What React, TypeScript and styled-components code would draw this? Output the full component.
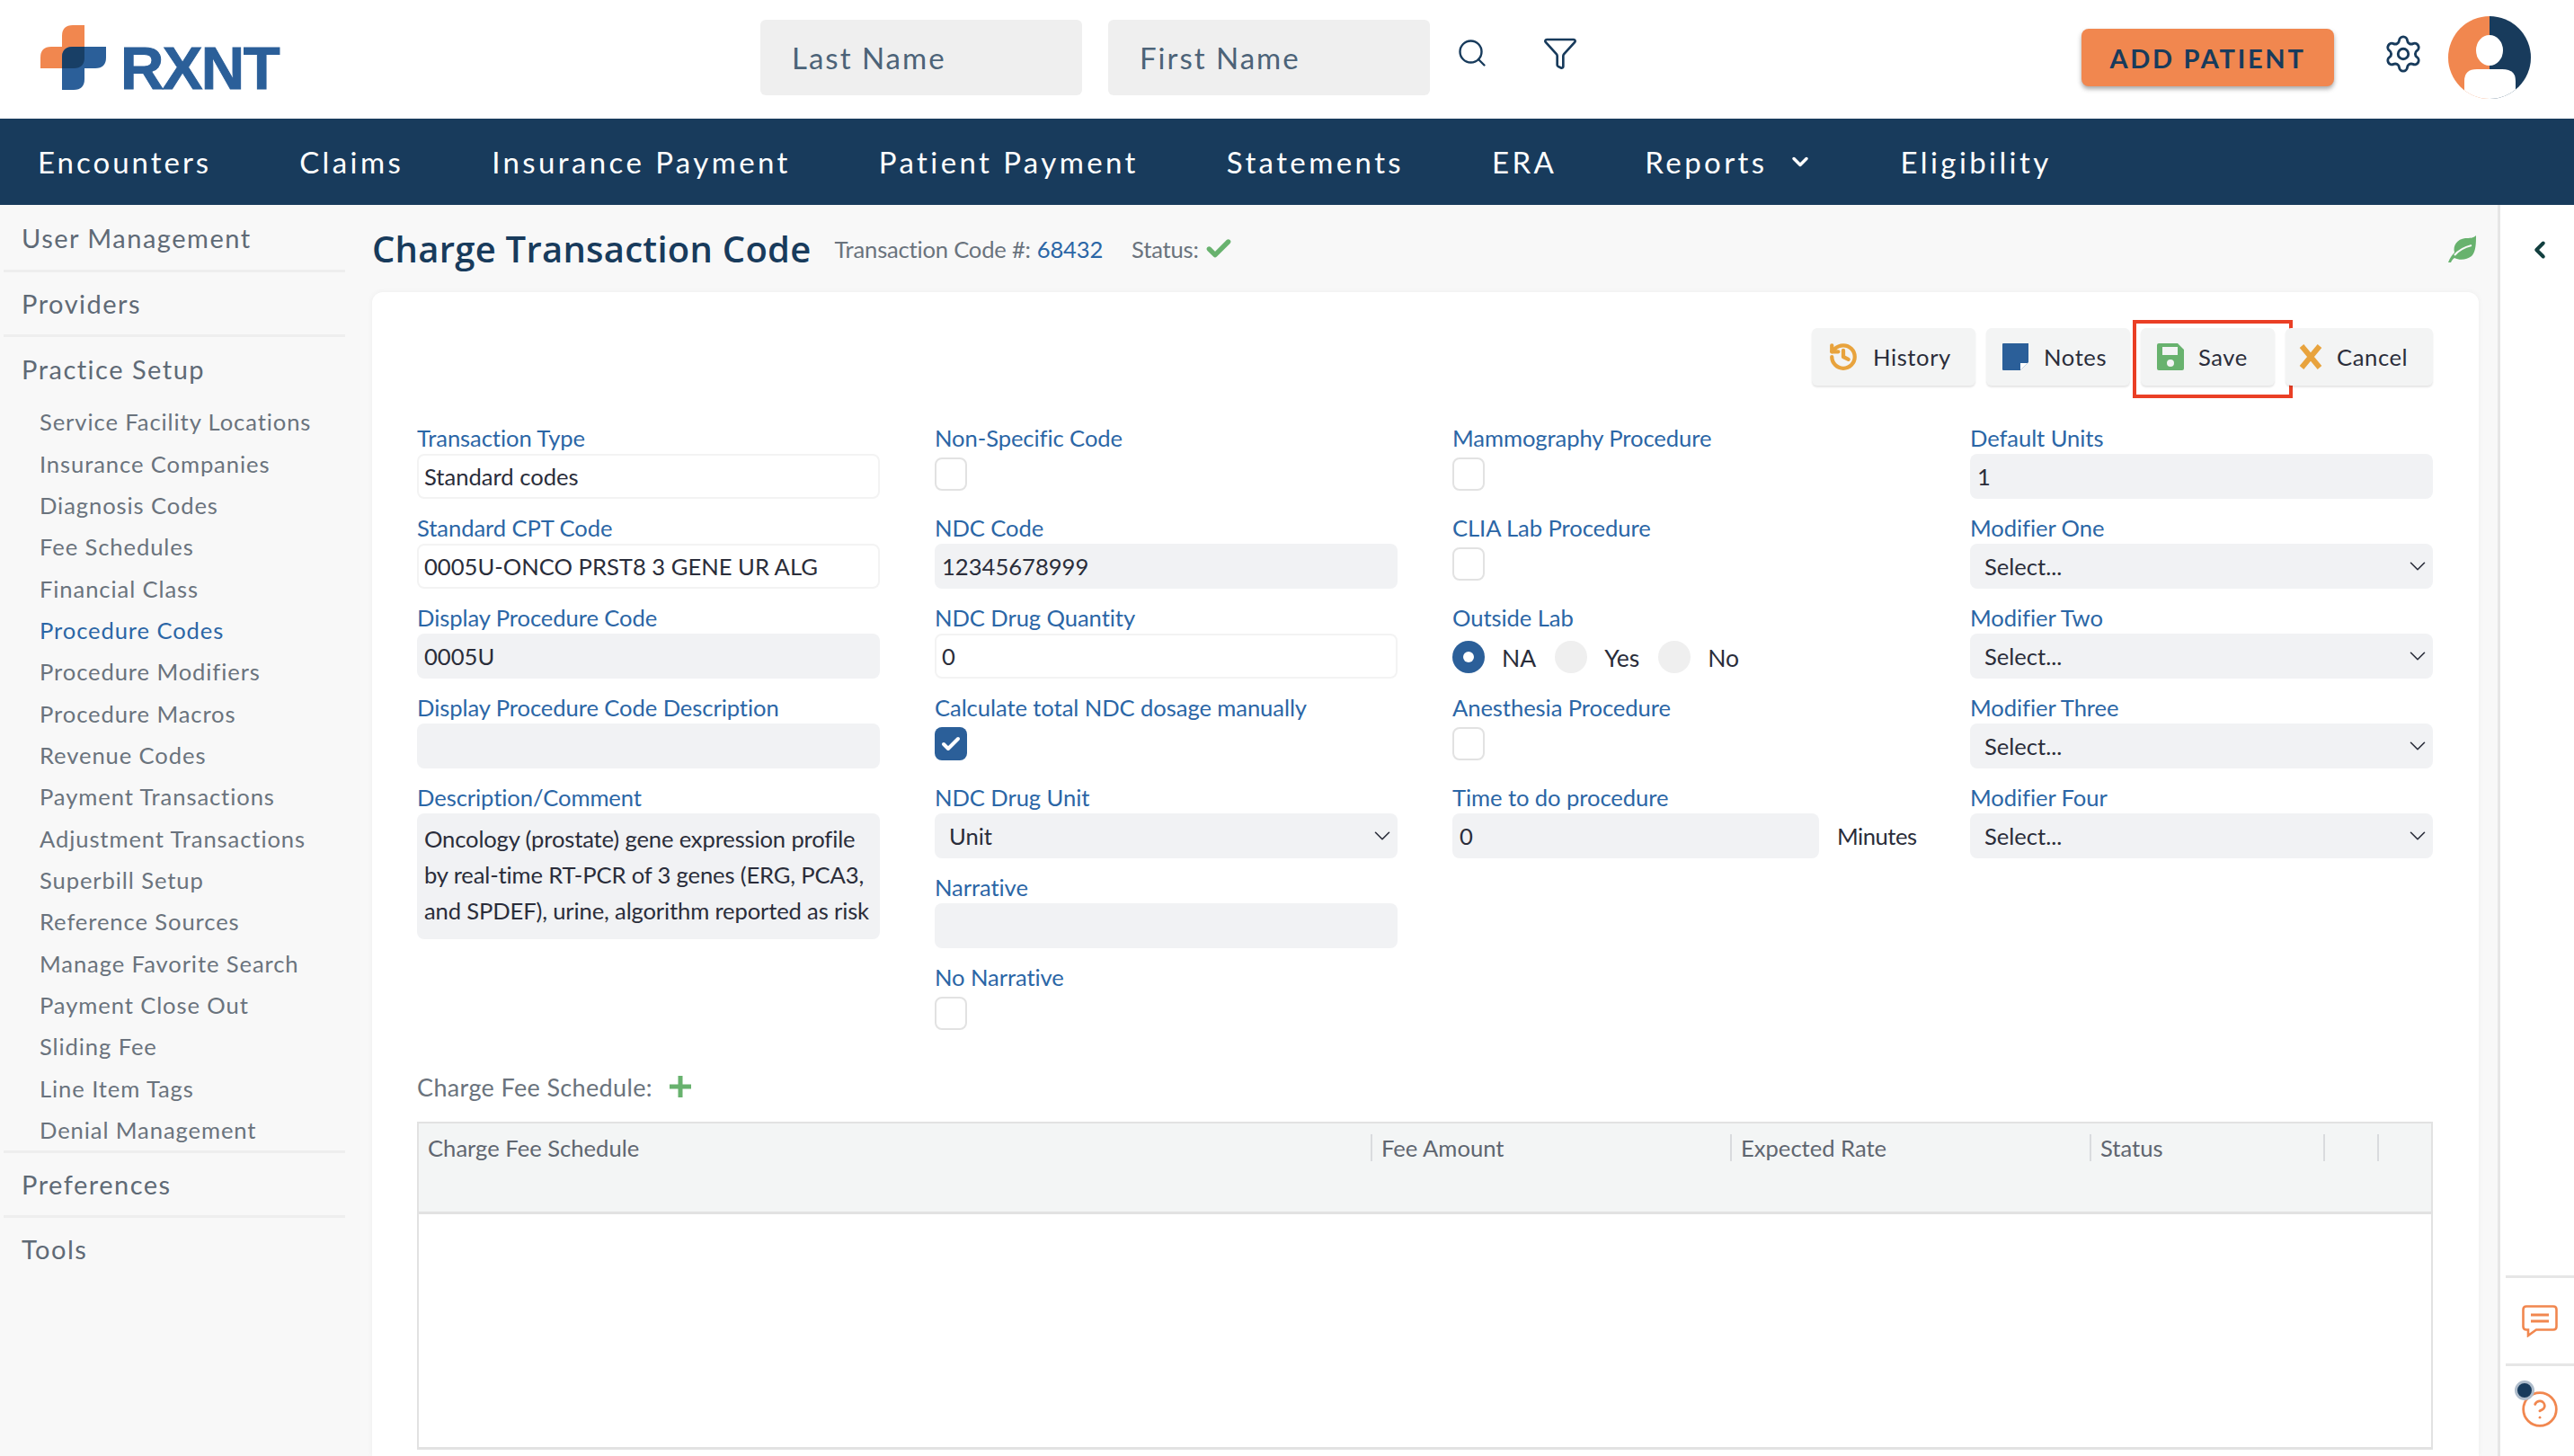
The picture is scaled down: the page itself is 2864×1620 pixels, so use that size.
import React from "react";
import styled, { createGlobalStyle } from "styled-components";
import { Search, Funnel, Settings, History, ChevronDown, ChevronLeft, CircleHelp, Check } from "lucide-react";

const UI = `"Lato", "Liberation Sans", sans-serif`;
const BLUE = "#2b66a6";
const NAVY = "#183b5c";
const ORANGE = "#f1874f";
const GREEN = "#68b26e";
const INK = "#2a2d3a";

const Global = createGlobalStyle`
  html, body { margin: 0; padding: 0; background: #fff; }
  body { width: 2864px; height: 1620px; overflow: hidden; font-family: ${UI}; }
  * { box-sizing: border-box; }
`;

const Page = styled.div`
  width: 2864px;
  height: 1620px;
  display: flex;
  flex-direction: column;
  overflow: hidden;
`;

const TopBar = styled.header`
  height: 132px;
  flex: none;
  display: flex;
  align-items: center;
  padding: 0 0 4px 45px;
  background: #fff;
`;
const Logo = styled.div`
  display: flex;
  align-items: flex-end;
  width: 801px;
  height: 72px;
`;
const LogoText = styled.span`
  margin-left: 16px;
  font-family: "Liberation Sans", sans-serif;
  font-weight: 700;
  font-size: 67px;
  line-height: 48px;
  height: 48px;
  letter-spacing: -1.6px;
  color: #2b5f99;
  -webkit-text-stroke: 1px #2b5f99;
`;
const SearchInput = styled.div`
  width: 358px;
  height: 84px;
  margin-right: 29px;
  padding-left: 35px;
  display: flex;
  align-items: center;
  border-radius: 6px;
  background: #efefef;
  color: #4c6378;
  font-size: 33px;
  letter-spacing: 2px;
`;
const IconSlot = styled.div<{ $w: number; $ml: number }>`
  width: ${(p) => p.$w}px;
  margin-left: ${(p) => p.$ml}px;
  margin-top: -10px;
  display: flex;
  color: ${NAVY};
`;
const AddButton = styled.button`
  margin-left: 560px;
  width: 281px;
  height: 64px;
  border: 0;
  border-radius: 8px;
  background: ${ORANGE};
  color: ${NAVY};
  font-family: ${UI};
  font-weight: 700;
  font-size: 29px;
  letter-spacing: 2.7px;
  box-shadow: 0 3px 5px rgba(60, 60, 60, 0.45);
`;
const Gear = styled.div`
  margin-left: 54px;
  margin-top: -8px;
  display: flex;
  color: ${NAVY};
`;
const Avatar = styled.svg`
  margin-left: 27px;
  margin-top: -1px;
`;

const NavBar = styled.nav`
  height: 96px;
  flex: none;
  display: flex;
  align-items: center;
  gap: 98px;
  padding-left: 42px;
  background: ${NAVY};
`;
const NavItem = styled.a`
  display: flex;
  align-items: center;
  gap: 22px;
  color: #fff;
  font-size: 33px;
  letter-spacing: 3.4px;
  &:first-child {
    letter-spacing: 3px;
  }
`;

const Body = styled.div`
  flex: 1;
  min-height: 0;
  display: flex;
  background: #f8f8f8;
`;
const Sidebar = styled.aside`
  width: 414px;
  flex: none;
  padding-left: 4px;
`;
const SideGroup = styled.div`
  width: 380px;
  border-bottom: 3px solid #eeeeee;
`;
const SideHead = styled.div<{ $h?: number }>`
  height: ${(p) => p.$h ?? 69}px;
  padding-left: 20px;
  display: flex;
  align-items: center;
  color: #5f6a76;
  font-size: 29px;
  letter-spacing: 1.5px;
`;
const SideSub = styled.div<{ $active?: boolean }>`
  height: 46.35px;
  padding-left: 40px;
  display: flex;
  align-items: center;
  color: ${(p) => (p.$active ? BLUE : "#6a737d")};
  font-size: 25.6px;
  letter-spacing: 0.9px;
`;
const SideTail = styled.div`
  width: 380px;
`;

const Main = styled.main`
  flex: 1;
  min-width: 0;
  display: flex;
  flex-direction: column;
`;
const TitleRow = styled.div`
  height: 97px;
  flex: none;
  display: flex;
  align-items: center;
  padding-right: 24px;
`;
const Title = styled.h1`
  margin: 0;
  font-family: "Open Sans", sans-serif;
  font-weight: 600;
  font-size: 40px;
  color: ${NAVY};
  letter-spacing: 0.25px;
`;
const Meta = styled.span<{ $ml: number }>`
  margin-left: ${(p) => p.$ml}px;
  display: flex;
  align-items: center;
  color: #6a737d;
  font-size: 25.6px;
  letter-spacing: -0.2px;
`;
const MetaValue = styled.span`
  margin-left: 7px;
  color: ${BLUE};
`;
const StatusMark = styled.span`
  margin-left: 6px;
  display: flex;
  color: ${GREEN};
`;
const Leaf = styled.svg`
  margin-left: auto;
`;

const Card = styled.section`
  width: 2344px;
  flex: 1;
  min-height: 0;
  padding: 40px 51px 0 50px;
  background: #fff;
  border-radius: 12px 12px 0 0;
  box-shadow: 0 0 6px rgba(0, 0, 0, 0.05);
`;
const Toolbar = styled.div`
  height: 64px;
  display: flex;
  justify-content: flex-end;
  gap: 12px;
`;
const ToolButton = styled.button<{ $w: number; $pl?: number }>`
  position: relative;
  width: ${(p) => p.$w}px;
  height: 64px;
  padding: 0 0 0 ${(p) => p.$pl ?? 18}px;
  display: flex;
  align-items: center;
  gap: 16px;
  border: 0;
  border-radius: 6px;
  background: #f3f4f4;
  box-shadow: 0 2px 2px rgba(0, 0, 0, 0.1);
  font-family: ${UI};
  font-size: 25.6px;
  letter-spacing: 0.6px;
  color: ${INK};
`;
const Highlight = styled.span`
  position: absolute;
  left: -9px;
  top: -9px;
  width: 178px;
  height: 87px;
  border: 4px solid #ea3f25;
  pointer-events: none;
`;

const FormGrid = styled.div`
  margin-top: 44px;
  display: grid;
  grid-template-columns: repeat(4, 515px);
  column-gap: 61px;
`;
const Column = styled.div`
  display: flex;
  flex-direction: column;
`;
const Field = styled.div`
  height: 100px;
  flex: none;
`;
const Label = styled.label`
  display: block;
  height: 32px;
  line-height: 28px;
  color: ${BLUE};
  font-size: 25.6px;
  letter-spacing: -0.08px;
  white-space: nowrap;
`;
const Box = styled.div<{ $white?: boolean }>`
  height: 50px;
  display: flex;
  align-items: center;
  padding-left: ${(p) => (p.$white ? 6 : 8)}px;
  border-radius: 8px;
  color: ${INK};
  font-size: 25.6px;
  white-space: nowrap;
  background: ${(p) => (p.$white ? "#fff" : "#f1f2f4")};
  border: ${(p) => (p.$white ? "2px solid #f3f3f3" : "0")};
`;
const SelectBox = styled(Box)`
  justify-content: space-between;
  padding: 0 2px 0 16px;
`;
const TextBlock = styled.div`
  height: 140px;
  padding: 8px 0 0 8px;
  border-radius: 8px;
  background: #f1f2f4;
  color: ${INK};
  font-size: 25.6px;
  line-height: 40px;
  letter-spacing: -0.15px;
`;
const CheckBox = styled.div<{ $on?: boolean }>`
  width: 36px;
  height: 37px;
  margin-top: 4px;
  display: flex;
  align-items: center;
  justify-content: center;
  border-radius: 8px;
  color: #fff;
  background: ${(p) => (p.$on ? "#2b5f99" : "#fff")};
  border: ${(p) => (p.$on ? "0" : "2px solid #e2e2e2")};
`;
const RadioRow = styled.div`
  margin-top: 8px;
  display: flex;
  align-items: center;
`;
const Radio = styled.span<{ $on?: boolean; $ml?: number }>`
  width: 36px;
  height: 36px;
  margin-left: ${(p) => p.$ml ?? 0}px;
  border-radius: 50%;
  background: ${(p) => (p.$on ? "#2b5f99" : "#efefef")};
  display: flex;
  align-items: center;
  justify-content: center;
  &::after {
    content: "";
    display: ${(p) => (p.$on ? "block" : "none")};
    width: 12px;
    height: 12px;
    border-radius: 50%;
    background: #fff;
  }
`;
const RadioText = styled.span`
  margin: 2px 0 0 19px;
  color: ${INK};
  font-size: 26.5px;
`;
const TimeRow = styled.div`
  display: flex;
  align-items: center;
`;
const TimeInput = styled(Box)`
  width: 408px;
  flex: none;
`;
const Unit = styled.span`
  margin-left: 20px;
  color: ${INK};
  font-size: 25.6px;
  letter-spacing: -0.5px;
  white-space: nowrap;
`;

const FeeHead = styled.div`
  margin-top: 20px;
  height: 32px;
  display: flex;
  align-items: center;
  gap: 18px;
  color: #6a737d;
  font-size: 27px;
  letter-spacing: 0.35px;
`;
const Table = styled.div`
  margin-top: 23px;
  height: 365px;
  border: 2px solid #e2e2e2;
  border-bottom-width: 3px;
`;
const TableHead = styled.div`
  height: 101px;
  border-bottom: 3px solid #e2e2e2;
  background: #f3f5f5;
  display: grid;
  grid-template-columns: 1059px 400px 400px 260px 60px 60px;
`;
const HeadCell = styled.div`
  height: 30px;
  margin-top: 12px;
  padding-left: 10px;
  line-height: 30px;
  color: #5f6670;
  font-size: 25.6px;
  white-space: nowrap;
  & + & {
    border-left: 2px solid #d9dbde;
  }
`;

const Rail = styled.aside`
  width: 85px;
  flex: none;
  display: flex;
  flex-direction: column;
  background: #fff;
  border-left: 3px solid #e6e6e6;
`;
const RailTop = styled.div`
  height: 1191px;
  flex: none;
  padding: 35px 0 0 29px;
  color: #123f3f;
`;
const RailCell = styled.div`
  position: relative;
  height: 98px;
  flex: none;
  margin-left: 6px;
  border-top: 3px solid #e6e6e6;
  display: flex;
  align-items: center;
  justify-content: center;
  color: ${ORANGE};
`;
const Dot = styled.span`
  position: absolute;
  left: 10px;
  top: 16px;
  width: 22px;
  height: 22px;
  border-radius: 50%;
  background: ${NAVY};
  border: 3px solid #aebccb;
`;

const sideTop = ["Service Facility Locations", "Insurance Companies", "Diagnosis Codes", "Fee Schedules", "Financial Class", "Procedure Codes", "Procedure Modifiers", "Procedure Macros", "Revenue Codes", "Payment Transactions", "Adjustment Transactions", "Superbill Setup", "Reference Sources", "Manage Favorite Search", "Payment Close Out", "Sliding Fee", "Line Item Tags", "Denial Management"];

const TextField = ({ label, value, white }: { label: string; value?: string; white?: boolean }) => (
  <Field>
    <Label>{label}</Label>
    <Box $white={white}>{value}</Box>
  </Field>
);
const SelectField = ({ label, value }: { label: string; value: string }) => (
  <Field>
    <Label>{label}</Label>
    <SelectBox>
      {value}
      <ChevronDown size={30} strokeWidth={1.3} />
    </SelectBox>
  </Field>
);
const CheckField = ({ label, on }: { label: string; on?: boolean }) => (
  <Field>
    <Label>{label}</Label>
    <CheckBox $on={on}>{on && <Check size={24} strokeWidth={4} />}</CheckBox>
  </Field>
);

export default function App() {
  return (
    <Page>
      <Global />
      <TopBar>
        <Logo>
          <svg width="73" height="72" viewBox="0 0 73 72">
            <path fill="#f1874f" d="M36 0H49V36Q49 48 37 48H0V36Q0 24 12 24H24V12Q24 0 36 0Z" />
            <path fill="#2b5f99" d="M36 24H73V36Q73 48 61 48H49V60Q49 72 37 72H24V36Q24 24 36 24Z" />
            <path fill="#183f66" d="M36 24H49V36Q49 48 37 48H24V36Q24 24 36 24Z" />
          </svg>
          <LogoText>RXNT</LogoText>
        </Logo>
        <SearchInput>Last Name</SearchInput>
        <SearchInput>First Name</SearchInput>
        <IconSlot $w={36} $ml={0}>
          <Search size={46} strokeWidth={1.6} />
        </IconSlot>
        <IconSlot $w={40} $ml={60}>
          <Funnel size={40} strokeWidth={1.6} />
        </IconSlot>
        <AddButton>ADD PATIENT</AddButton>
        <Gear>
          <Settings size={46} strokeWidth={1.5} />
        </Gear>
        <Avatar width="92" height="92" viewBox="0 0 92 92">
          <defs>
            <clipPath id="avatar-clip">
              <circle cx="46" cy="46" r="46" />
            </clipPath>
          </defs>
          <g clipPath="url(#avatar-clip)">
            <rect width="46" height="92" fill="#f1874f" />
            <rect x="46" width="46" height="92" fill="#183b5c" />
            <ellipse cx="46" cy="38" rx="15" ry="17" fill="#fff" />
            <path fill="#fff" d="M18 92V72Q18 59 32 59H60Q75 59 75 72V92Z" />
          </g>
        </Avatar>
      </TopBar>
      <NavBar>
        <NavItem>Encounters</NavItem>
        <NavItem>Claims</NavItem>
        <NavItem>Insurance Payment</NavItem>
        <NavItem>Patient Payment</NavItem>
        <NavItem>Statements</NavItem>
        <NavItem>ERA</NavItem>
        <NavItem>
          Reports <ChevronDown size={28} strokeWidth={3} />
        </NavItem>
        <NavItem>Eligibility</NavItem>
      </NavBar>
      <Body>
        <Sidebar>
          <SideGroup>
            <SideHead $h={72}>User Management</SideHead>
          </SideGroup>
          <SideGroup>
            <SideHead $h={69}>Providers</SideHead>
          </SideGroup>
          <SideGroup>
            <SideHead $h={71}>Practice Setup</SideHead>
            {sideTop.map((s) => (
              <SideSub key={s} $active={s === "Procedure Codes"}>
                {s}
              </SideSub>
            ))}
          </SideGroup>
          <SideGroup>
            <SideHead $h={69}>Preferences</SideHead>
          </SideGroup>
          <SideTail>
            <SideHead>Tools</SideHead>
          </SideTail>
        </Sidebar>
        <Main>
          <TitleRow>
            <Title>Charge Transaction Code</Title>
            <Meta $ml={26}>
              Transaction Code #:<MetaValue>68432</MetaValue>
            </Meta>
            <Meta $ml={32}>
              Status:
              <StatusMark>
                <Check size={32} strokeWidth={4} />
              </StatusMark>
            </Meta>
            <Leaf width="32" height="30" viewBox="0 0 32 30">
              <path fill={GREEN} d="M1 30C3 25 5 22 8 19 6 11 11 4 20 3 25 3 29 3 32 0 32 8 32 18 27 23 22 27 14 28 8 25 6 26 5 28 4 30Z" />
              <path fill="none" stroke="#f8f8f8" strokeWidth="2" d="M8 22C13 16 19 13 27 11" />
            </Leaf>
          </TitleRow>
          <Card>
            <Toolbar>
              <ToolButton $w={182}>
                <History size={34} strokeWidth={3} color="#e8a33d" />
                History
              </ToolButton>
              <ToolButton $w={160}>
                <svg width="30" height="30" viewBox="0 0 30 30">
                  <path fill="#2b5f99" d="M1 0H29V21L20 30H1Q0 30 0 29V1Q0 0 1 0Z" />
                  <path fill="#fff" d="M20 30V22H28Z" />
                </svg>
                Notes
              </ToolButton>
              <ToolButton $w={149}>
                <svg width="30" height="30" viewBox="0 0 30 30">
                  <path fill={GREEN} fillRule="evenodd" d="M2 0H23L30 7V28Q30 30 28 30H2Q0 30 0 28V2Q0 0 2 0ZM6 4V13H23V4ZM15 18A4 4 0 1 0 15 26 4 4 0 1 0 15 18Z" />
                </svg>
                Save
                <Highlight />
              </ToolButton>
              <ToolButton $w={164} $pl={15}>
                <svg width="26" height="28" viewBox="0 0 26 28">
                  <path stroke="#e8a33d" strokeWidth="6" fill="none" d="M3 2L23 26M23 2L3 26" />
                </svg>
                Cancel
              </ToolButton>
            </Toolbar>
            <FormGrid>
              <Column>
                <TextField label="Transaction Type" value="Standard codes" white />
                <TextField label="Standard CPT Code" value="0005U-ONCO PRST8 3 GENE UR ALG" white />
                <TextField label="Display Procedure Code" value="0005U" />
                <TextField label="Display Procedure Code Description" />
                <Field>
                  <Label>Description/Comment</Label>
                  <TextBlock>Oncology (prostate) gene expression profile by real-time RT-PCR of 3 genes (ERG, PCA3, and SPDEF), urine, algorithm reported as risk</TextBlock>
                </Field>
              </Column>
              <Column>
                <CheckField label="Non-Specific Code" />
                <TextField label="NDC Code" value="12345678999" />
                <TextField label="NDC Drug Quantity" value="0" white />
                <CheckField label="Calculate total NDC dosage manually" on />
                <SelectField label="NDC Drug Unit" value="Unit" />
                <TextField label="Narrative" />
                <CheckField label="No Narrative" />
              </Column>
              <Column>
                <CheckField label="Mammography Procedure" />
                <CheckField label="CLIA Lab Procedure" />
                <Field>
                  <Label>Outside Lab</Label>
                  <RadioRow>
                    <Radio $on />
                    <RadioText>NA</RadioText>
                    <Radio $ml={21} />
                    <RadioText>Yes</RadioText>
                    <Radio $ml={21} />
                    <RadioText>No</RadioText>
                  </RadioRow>
                </Field>
                <CheckField label="Anesthesia Procedure" />
                <Field>
                  <Label>Time to do procedure</Label>
                  <TimeRow>
                    <TimeInput>0</TimeInput>
                    <Unit>Minutes</Unit>
                  </TimeRow>
                </Field>
              </Column>
              <Column>
                <TextField label="Default Units" value="1" />
                <SelectField label="Modifier One" value="Select..." />
                <SelectField label="Modifier Two" value="Select..." />
                <SelectField label="Modifier Three" value="Select..." />
                <SelectField label="Modifier Four" value="Select..." />
              </Column>
            </FormGrid>
            <FeeHead>
              Charge Fee Schedule:
              <svg width="26" height="26" viewBox="0 0 26 26">
                <path stroke={GREEN} strokeWidth="5" d="M13 1V25M1 13H25" />
              </svg>
            </FeeHead>
            <Table>
              <TableHead>
                <HeadCell>Charge Fee Schedule</HeadCell>
                <HeadCell>Fee Amount</HeadCell>
                <HeadCell>Expected Rate</HeadCell>
                <HeadCell>Status</HeadCell>
                <HeadCell />
                <HeadCell />
              </TableHead>
            </Table>
          </Card>
        </Main>
        <Rail>
          <RailTop>
            <ChevronLeft size={30} strokeWidth={3.2} />
          </RailTop>
          <RailCell>
            <svg width="40" height="36" viewBox="0 0 40 36" fill="none" stroke="currentColor" strokeWidth="2.6">
              <path d="M5 1.5H35Q38.5 1.5 38.5 5V24Q38.5 27.5 35 27.5H16L7 34V27.5H5Q1.5 27.5 1.5 24V5Q1.5 1.5 5 1.5Z" />
              <path strokeWidth="3" d="M10 11H30M10 18H30" />
            </svg>
          </RailCell>
          <RailCell>
            <CircleHelp size={44} strokeWidth={1.5} />
            <Dot />
          </RailCell>
        </Rail>
      </Body>
    </Page>
  );
}
